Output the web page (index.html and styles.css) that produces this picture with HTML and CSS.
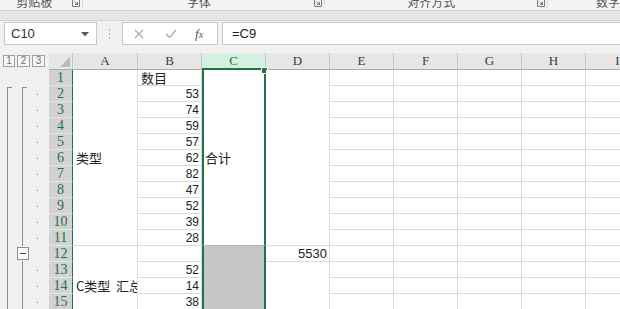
FILE: index.html
```html
<!DOCTYPE html>
<html lang="zh">
<head>
<meta charset="utf-8">
<link rel="stylesheet" href="styles.css">
</head>
<body>
<div class="ribbon">
  <div class="grp g1"><span class="glabel">剪贴板</span><svg class="launch" width="8" height="8" viewBox="0 0 8 8"><path d="M0.5 0 V7.5 H7.5 V0" fill="none" stroke="#7a7a7a"/><path d="M2.5 2.5 L5.5 5.5 M5.5 3 V5.5 H3" fill="none" stroke="#7a7a7a"/></svg></div>
  <div class="grp g2"><span class="glabel">字体</span><svg class="launch" width="8" height="8" viewBox="0 0 8 8"><path d="M0.5 0 V7.5 H7.5 V0" fill="none" stroke="#7a7a7a"/><path d="M2.5 2.5 L5.5 5.5 M5.5 3 V5.5 H3" fill="none" stroke="#7a7a7a"/></svg></div>
  <div class="grp g3"><span class="glabel">对齐方式</span><svg class="launch" width="8" height="8" viewBox="0 0 8 8"><path d="M0.5 0 V7.5 H7.5 V0" fill="none" stroke="#7a7a7a"/><path d="M2.5 2.5 L5.5 5.5 M5.5 3 V5.5 H3" fill="none" stroke="#7a7a7a"/></svg></div>
  <div class="grp g4"><span class="glabel">数字</span></div>
</div>
<div class="band"></div>
<div class="fbar">
  <div class="namebox"><span class="nbtext">C10</span><svg class="nbarrow" width="8" height="5" viewBox="0 0 8 5"><path d="M0 0 H8 L4 4.5 Z" fill="#5a5a5a"/></svg></div>
  <div class="grip"><svg width="3" height="12" viewBox="0 0 3 12"><rect x="1" y="1" width="1" height="2" fill="#b4b4b4"/><rect x="1" y="5" width="1" height="2" fill="#b4b4b4"/><rect x="1" y="9" width="1" height="2" fill="#b4b4b4"/></svg></div>
  <div class="fbtns">
    <svg class="fbx" width="10" height="10" viewBox="0 0 10 10"><path d="M1 1 L9 9 M9 1 L1 9" stroke="#a8a8a8" stroke-width="1.1" fill="none"/></svg>
    <svg class="fbok" width="12" height="10" viewBox="0 0 12 10"><path d="M1 5 L4.5 8.5 L11 1" stroke="#a8a8a8" stroke-width="1.2" fill="none"/></svg>
    <span class="fx">f<span class="fxx">x</span></span>
  </div>
  <div class="finput">=C9</div>
</div>
<div class="sheetwrap">
  <div class="outline">
    <div class="olhead"><span class="olbtn">1</span><span class="olbtn">2</span><span class="olbtn">3</span></div>
    <div class="olbody">
      <div class="olc c1"><div class="sp"></div><div class="vl tick l15"></div></div>
      <div class="olc c2"><div class="sp"></div><div class="vl tick l10"></div><div class="minus"><span class="mbar"></span></div><div class="vl l4"></div></div>
      <div class="olc c3">
        <div class="oc"></div>
        <div class="oc"><i class="dot"></i></div><div class="oc"><i class="dot"></i></div><div class="oc"><i class="dot"></i></div><div class="oc"><i class="dot"></i></div><div class="oc"><i class="dot"></i></div>
        <div class="oc"><i class="dot"></i></div><div class="oc"><i class="dot"></i></div><div class="oc"><i class="dot"></i></div><div class="oc"><i class="dot"></i></div><div class="oc"><i class="dot"></i></div>
        <div class="oc"></div>
        <div class="oc"><i class="dot"></i></div><div class="oc"><i class="dot"></i></div><div class="oc"><i class="dot"></i></div><div class="oc"><i class="dot"></i></div>
      </div>
    </div>
  </div>
  <div class="grid">
    <div class="corner"><svg width="10" height="10" viewBox="0 0 10 10"><path d="M10 0 V10 H0 Z" fill="#b8b8b8"/></svg></div>
    <div class="ch">A</div><div class="ch">B</div><div class="ch sel">C</div><div class="ch">D</div><div class="ch">E</div><div class="ch">F</div><div class="ch">G</div><div class="ch">H</div><div class="ch">I</div>

    <div class="rh">1</div><div class="c txt span11">类型</div><div class="c txt">数目</div><div class="c csel txt span11 handle">合计</div><div class="c span11 dm"></div><div class="c"></div><div class="c"></div><div class="c"></div><div class="c"></div><div class="c"></div>
    <div class="rh">2</div><div class="c num">53</div><div class="c"></div><div class="c"></div><div class="c"></div><div class="c"></div><div class="c"></div>
    <div class="rh">3</div><div class="c num">74</div><div class="c"></div><div class="c"></div><div class="c"></div><div class="c"></div><div class="c"></div>
    <div class="rh">4</div><div class="c num">59</div><div class="c"></div><div class="c"></div><div class="c"></div><div class="c"></div><div class="c"></div>
    <div class="rh">5</div><div class="c num">57</div><div class="c"></div><div class="c"></div><div class="c"></div><div class="c"></div><div class="c"></div>
    <div class="rh">6</div><div class="c num">62</div><div class="c"></div><div class="c"></div><div class="c"></div><div class="c"></div><div class="c"></div>
    <div class="rh">7</div><div class="c num">82</div><div class="c"></div><div class="c"></div><div class="c"></div><div class="c"></div><div class="c"></div>
    <div class="rh">8</div><div class="c num">47</div><div class="c"></div><div class="c"></div><div class="c"></div><div class="c"></div><div class="c"></div>
    <div class="rh">9</div><div class="c num">52</div><div class="c"></div><div class="c"></div><div class="c"></div><div class="c"></div><div class="c"></div>
    <div class="rh">10</div><div class="c num">39</div><div class="c"></div><div class="c"></div><div class="c"></div><div class="c"></div><div class="c"></div>
    <div class="rh">11</div><div class="c num">28</div><div class="c"></div><div class="c"></div><div class="c"></div><div class="c"></div><div class="c"></div>
    <div class="rh">12</div><div class="c txt span5 clip">C类型&nbsp;&nbsp;汇总</div><div class="c"></div><div class="c csel gray span5"></div><div class="c num big">5530</div><div class="c"></div><div class="c"></div><div class="c"></div><div class="c"></div><div class="c"></div>
    <div class="rh">13</div><div class="c num">52</div><div class="c span4"></div><div class="c"></div><div class="c"></div><div class="c"></div><div class="c"></div><div class="c"></div>
    <div class="rh">14</div><div class="c num">14</div><div class="c"></div><div class="c"></div><div class="c"></div><div class="c"></div><div class="c"></div>
    <div class="rh">15</div><div class="c num">38</div><div class="c"></div><div class="c"></div><div class="c"></div><div class="c"></div><div class="c"></div>
    <div class="rh">16</div><div class="c"></div><div class="c"></div><div class="c"></div><div class="c"></div><div class="c"></div><div class="c"></div>
  </div>
</div>
</body>
</html>
```
FILE: styles.css
```css
* { box-sizing: border-box; }
html, body { margin: 0; padding: 0; }
body {
  width: 620px; height: 309px; overflow: hidden; background: #ffffff;
  font-family: "Liberation Sans", "Noto Sans CJK SC", sans-serif;
}
.ribbon {
  height: 11px; background: #f3f3f3; border-bottom: 1px solid #d6d6d6;
  display: flex; overflow: hidden; white-space: nowrap;
}
.grp { display: flex; align-items: flex-start; height: 10px; }
.g1 { width: 85px; border-right: 1px solid #dadada; height: 8px; }
.g2 { width: 247px; border-right: 1px solid #dadada; height: 8px; }
.g3 { width: 227px; border-right: 1px solid #dadada; height: 8px; }
.g4 { flex: 1; padding-left: 48px; }
.glabel {
  flex: 1; text-align: center; font-size: 12px; line-height: 12px; margin-top: -4px;
  color: #555; font-family: "Noto Sans CJK SC", sans-serif;
}
.g1 .glabel { padding-right: 4px; }
.g4 .glabel { text-align: left; }
.launch { margin-right: 2px; margin-top: -1px; }
.band { height: 9px; background: #e6e6e6; }
.fbar {
  height: 33px; background: #f1f1f1; display: flex; align-items: flex-start;
  padding-top: 1px; border-top: 1px solid #d4d4d4;
}
.namebox {
  margin-left: 4px; width: 93px; height: 23px; background: #fff; border: 1px solid #c8c8c8;
  display: flex; align-items: center; justify-content: space-between; padding: 0 7px 0 6px;
}
.nbtext { font-size: 13px; color: #333; }
.nbarrow { margin-top: 1px; }
.grip { width: 25px; height: 23px; display: flex; align-items: center; justify-content: center; }
.fbtns {
  width: 96px; height: 23px; background: #fff; border: 1px solid #c8c8c8;
  display: flex; align-items: center; padding-left: 11px;
}
.fbx { margin-right: 21px; }
.fbok { margin-right: 18px; }
.fx { font-family: "Liberation Serif", serif; font-style: italic; font-size: 13px; color: #555; }
.fxx { font-size: 10px; }
.finput {
  margin-left: 4px; flex: 1; height: 23px; background: #fff; border: 1px solid #c8c8c8; border-right: none;
  font-size: 13px; line-height: 21px; padding-left: 9px; color: #222;
}
.sheetwrap { display: flex; }
.outline { width: 49px; background: #f0f0f0; flex: none; }
.olhead { height: 17px; display: flex; align-items: flex-start; padding: 2px 0 0 3px; gap: 2px; }
.olbtn {
  width: 12px; height: 12px; border: 1px solid #a0a0a0; background: #f6f6f6;
  font-size: 10px; line-height: 10px; text-align: center; color: #707070;
}
.olbtn + .olbtn { width: 13px; }
.olbody { display: flex; }
.olc { display: flex; flex-direction: column; }
.c1 { width: 15px; }
.c2 { width: 15px; }
.c3 { width: 19px; }
.sp { height: 16px; }
.vl { margin-left: 7px; border-left: 1px solid #8e8e8e; width: 5px; }
.tick { border-top: 1px solid #8e8e8e; margin-top: 1px; }
.l15 { height: 240px; }
.l10 { height: 159px; }
.l4 { height: 64px; margin-top: 1px; }
.minus {
  height: 13px; width: 12px; margin-left: 2px; border: 1px solid #8e8e8e; background: #f7f7f7;
  display: flex; align-items: center; justify-content: center; margin-top: 1px;
}
.mbar { width: 6px; height: 1px; background: #444; }
.oc { height: 16px; display: flex; align-items: center; padding-left: 7px; }
.dot { width: 1px; height: 1px; background: #7a7a7a; display: block; }
.grid {
  display: grid; grid-template-columns: 24px 65px repeat(8, 64px);
  grid-template-rows: 17px repeat(16, 16px); flex: none;
}
.corner {
  background: #e6e6e6; border-right: 1px solid #c6c6c6; border-bottom: 1px solid #ababab;
  display: flex; align-items: flex-end; justify-content: flex-end; padding: 0 2px 2px 0;
}
.ch {
  background: #e6e6e6; border-right: 1px solid #c6c6c6; border-bottom: 1px solid #ababab;
  font-family: "Liberation Serif", serif; font-size: 13px; line-height: 16px; text-align: center; color: #3a3a3a;
}
.ch.sel { background: #d3f0e0; color: #217346; border-bottom: 2px solid #217346; }
.rh {
  background: #d2d2d2; border-right: 1px solid #217346; border-bottom: 1px solid #e4e4e4;
  font-family: "Liberation Serif", serif; font-size: 14px; line-height: 15px; text-align: center; color: #217346;
}
.c { border-right: 1px solid #dadada; border-bottom: 1px solid #dadada; background: #fff; position: relative; overflow: hidden; white-space: nowrap; }
.txt {
  font-family: "Noto Sans CJK SC", sans-serif; font-size: 13px; color: #222;
  display: flex; align-items: center; padding-left: 3px;
}
.num { font-size: 12px; text-align: right; padding-right: 2px; line-height: 16px; color: #222; }
.num.big { font-size: 13px; }
.span11 { grid-row: span 11; }
.span5 { grid-row: span 5; }
.span4 { grid-row: span 4; }
.csel { border-left: 2px solid #217346; border-right: 2px solid #217346; overflow: visible; }
.csel.txt { padding-left: 1px; border-bottom-color: #b4b4b4; }
.gray { background: #c6c6c6; border-bottom: none; }
.handle::after {
  content: ""; position: absolute; right: -4px; top: -3px; width: 5px; height: 5px;
  background: #217346; border: 1px solid #fff;
}
.clip { overflow: hidden; }
```
